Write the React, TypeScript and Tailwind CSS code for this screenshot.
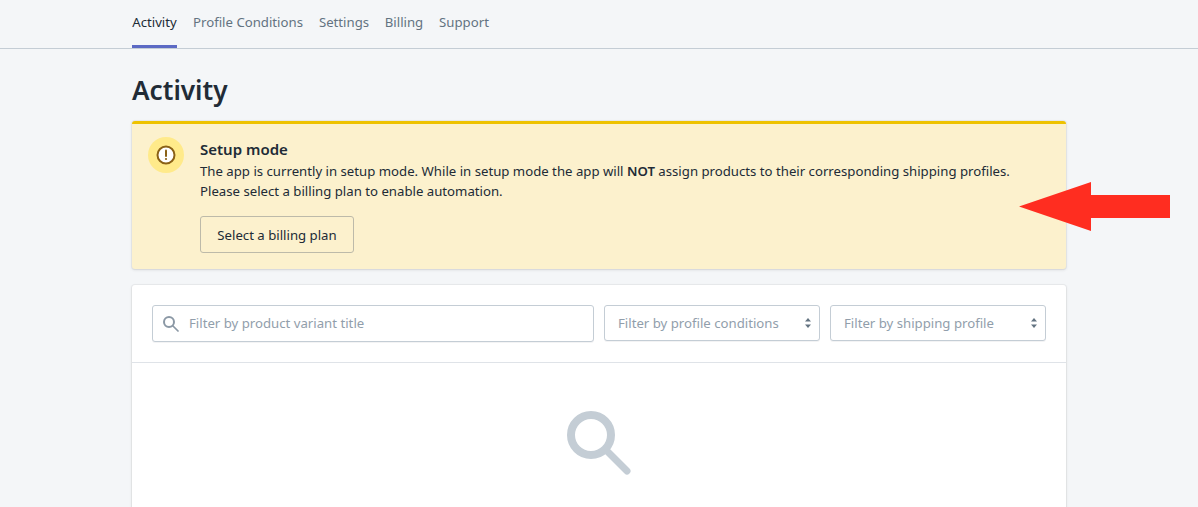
const font = "[font-family:'Noto_Sans','Open_Sans',sans-serif]";

const tabs = [
  { label: "Activity", width: "w-[45px]", active: true },
  { label: "Profile Conditions", width: "w-[110px]", active: false },
  { label: "Settings", width: "w-[50px]", active: false },
  { label: "Billing", width: "w-[38px]", active: false },
  { label: "Support", width: "w-[50px]", active: false },
];

function SearchGlyph({ className }: { className: string }) {
  return (
    <svg className={className} viewBox="0 0 64 64" fill="none">
      <circle cx="24" cy="24" r="20" stroke="currentColor" strokeWidth="8" />
      <path d="M39 39 L60 60" stroke="currentColor" strokeWidth="7" strokeLinecap="round" />
    </svg>
  );
}

function SelectBox({ label }: { label: string }) {
  return (
    <div className="flex h-9 w-[216px] items-center justify-between rounded-[3px] border border-[#c4cdd5] bg-white pl-[13px] pr-[7px] shadow-[0_1px_0_rgba(22,29,37,0.05)]">
      <span className="whitespace-nowrap pt-px text-[13.2px] text-[#919eab]">{label}</span>
      <svg className="h-[12px] w-[8px] text-[#637381]" viewBox="0 0 8 12" fill="currentColor">
        <path d="M4 1 L7 4.6 H1 Z" />
        <path d="M4 11 L1 7.4 H7 Z" />
      </svg>
    </div>
  );
}

export default function App() {
  return (
    <main className={`relative h-[507px] w-[1198px] overflow-hidden bg-[#f4f6f8] text-[#212b36] ${font}`}>
      <nav className="h-[49px] border-b border-[#c4cdd5]">
        <ul className="ml-[132px] flex h-[48px] gap-4">
          {tabs.map((tab) => (
            <li
              key={tab.label}
              className={`flex ${tab.width} items-center justify-center whitespace-nowrap border-b-[3px] pt-[1px] text-[13.2px] ${
                tab.active ? "border-[#5c6ac4] text-[#212b36]" : "border-transparent text-[#637381]"
              }`}
            >
              {tab.label}
            </li>
          ))}
        </ul>
      </nav>

      <div className="ml-[132px] w-[934px]">
        <h1 className="mt-[21px] h-[40px] text-[26.2px] font-semibold leading-[40px]">Activity</h1>

        <section className="mt-[11px] flex h-[148px] gap-[16px] rounded-[3px] border-t-[3px] border-[#eec200] bg-[#fcf1cd] pl-4 pt-[13px] shadow-[0_0_0_1px_rgba(63,63,68,0.05),0_1px_3px_rgba(63,63,68,0.15)]">
          <div className="flex size-9 shrink-0 items-center justify-center rounded-full bg-[#ffea8a]">
            <svg className="size-5" viewBox="0 0 20 20" fill="none">
              <circle cx="10" cy="10" r="8.5" fill="#fff" stroke="#8a6116" strokeWidth="2" />
              <path d="M10 5.5 V11" stroke="#8a6116" strokeWidth="2" strokeLinecap="round" />
              <circle cx="10" cy="14" r="1.1" fill="#8a6116" />
            </svg>
          </div>
          <div className="min-w-0">
            <h2 className="text-[15px] font-semibold leading-[24px]">Setup mode</h2>
            <p className="whitespace-nowrap text-[13.2px] leading-[20px]">
              The app is currently in setup mode. While in setup mode the app will <strong className="font-semibold">NOT</strong> assign products to their corresponding shipping profiles.
            </p>
            <p className="whitespace-nowrap text-[13.2px] leading-[20px]">Please select a billing plan to enable automation.</p>
            <button className="mt-[15px] h-[37px] w-[154px] rounded-[3px] border border-[#bdbaa9] pt-[2px] text-[13.2px] leading-none">
              Select a billing plan
            </button>
          </div>
        </section>

        <section className="mt-4 h-[300px] rounded-[3px] bg-white shadow-[0_0_0_1px_rgba(63,63,68,0.05),0_1px_3px_rgba(63,63,68,0.15)]">
          <div className="flex h-[78px] gap-[10px] border-b border-[#dfe3e8] px-5 pt-5">
            <div className="flex h-[37px] flex-1 items-center gap-[10px] rounded-[3px] border border-[#c4cdd5] bg-white pl-[10px] shadow-[0_1px_0_rgba(22,29,37,0.05)]">
              <SearchGlyph className="size-4 text-[#8b98a5]" />
              <span className="whitespace-nowrap text-[13.2px] text-[#919eab]">Filter by product variant title</span>
            </div>
            <SelectBox label="Filter by profile conditions" />
            <SelectBox label="Filter by shipping profile" />
          </div>
          <div className="flex justify-center pt-[48px]">
            <SearchGlyph className="size-16 text-[#c4cdd5]" />
          </div>
        </section>
      </div>

      <svg className="absolute left-[1019px] top-[182px] h-[49px] w-[151px]" viewBox="0 0 151 49" fill="#ff2d20">
        <path d="M0 24.5 L72 0 V13 H151 V36 H72 V49 Z" />
      </svg>
    </main>
  );
}
